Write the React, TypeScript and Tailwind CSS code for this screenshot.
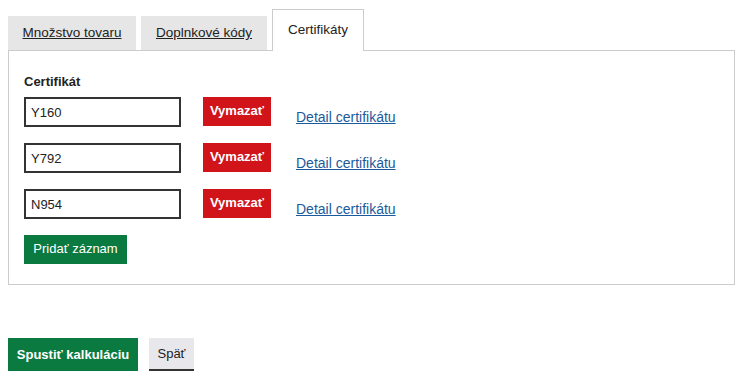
const rows = ["Y160", "Y792", "N954"];

const App = () => {
  return (
    <div className="min-h-screen bg-white pt-[9px] pl-2 pr-5 text-[13px] leading-4 text-[#222] font-['Liberation_Sans',Arial,sans-serif]">
      {/* Tabs */}
      <div className="flex items-end gap-[5px]">
        <a href="#" className="flex h-[34px] w-[128px] items-center justify-center bg-[#e6e6e6] text-[13.5px] underline">
          Množstvo tovaru
        </a>
        <a href="#" className="flex h-[34px] w-[126px] items-center justify-center bg-[#e6e6e6] text-[13.5px] underline">
          Doplnkové kódy
        </a>
        <div className="relative z-10 -mb-px flex h-[42px] w-[92px] items-center justify-center border border-b-0 border-[#cccccc] bg-white pb-[2px] text-[13.5px]">
          Certifikáty
        </div>
      </div>

      {/* Panel */}
      <div className="w-[727px] border border-[#cccccc] px-[15px] pt-[23px] pb-[20px]">
        <div className="mb-[7px] font-bold">Certifikát</div>
        <div className="flex flex-col gap-4">
          {rows.map((code) => (
            <div key={code} className="flex items-start">
              <input
                defaultValue={code}
                className="h-[30px] w-[157px] border-2 border-[#333] px-[5px] text-[13px] outline-none"
              />
              <button className="ml-[22px] flex h-[29px] w-[68px] items-center justify-center bg-[#d0141a] pb-[2px] font-bold text-white">
                Vymazať
              </button>
              <a href="#" className="ml-[25px] mt-[12px] text-[14px] text-[#1c5a9c] underline">
                Detail certifikátu
              </a>
            </div>
          ))}
        </div>
        <button className="mt-4 flex h-[29px] w-[103px] items-center justify-center bg-[#0b7a40] pb-[2px] text-white">
          Pridať záznam
        </button>
      </div>

      {/* Bottom actions */}
      <div className="mt-[53px] flex items-start gap-[11px]">
        <button className="flex h-[33px] w-[130px] items-center justify-center bg-[#0b7a40] font-bold text-white">
          Spustiť kalkuláciu
        </button>
        <button className="flex h-[33px] w-[45px] items-center justify-center border-b-2 border-[#333] bg-[#e8e8ec]">
          Späť
        </button>
      </div>
    </div>
  );
};

export default App;
